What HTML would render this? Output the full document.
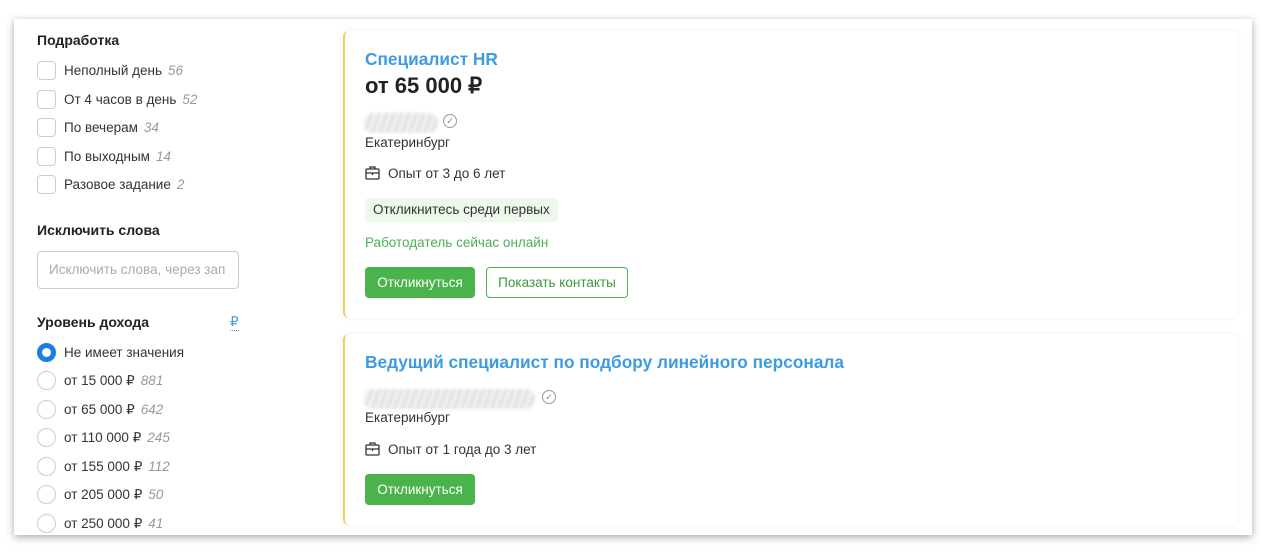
<!DOCTYPE html>
<html><head><meta charset="utf-8"><style>
*{margin:0;padding:0;box-sizing:border-box}
body{width:1280px;height:558px;background:#fff;font-family:"Liberation Sans",Arial,sans-serif;color:#333;position:relative;overflow:hidden}
.panel{position:absolute;left:14px;top:19px;width:1238px;height:516px;background:#fff;box-shadow:0 2px 8px rgba(0,0,0,.35)}
.a{position:absolute;white-space:nowrap}
.h{font-weight:bold;font-size:14px;color:#222}
.t{font-size:13.5px;color:#333}
.n{font-style:italic;color:#999;margin-left:6px}
.cb{position:absolute;width:19px;height:19px;border:1px solid #ccc;border-radius:4px}
.rb{position:absolute;width:19px;height:19px;border:1px solid #ccc;border-radius:50%}
.card{position:absolute;left:343px;width:894px;background:#fff;border-left:2px solid #f3cf57;border-radius:6px;box-shadow:0 0 6px rgba(0,0,0,.07)}
.title{font-size:17.3px;font-weight:bold;color:#3d9be0}
.btn{position:absolute;height:31px;border-radius:4px;font-size:13.5px;line-height:31px;text-align:center}
.blur{position:absolute;height:20px;border-radius:10px;background:repeating-linear-gradient(110deg,#ddd 0 3px,#f3f3f3 3px 7px);filter:blur(1.5px)}
.chk{position:absolute;width:14px;height:14px;border:1px solid #999;border-radius:50%;font-size:9px;line-height:12px;text-align:center;color:#888}
</style></head><body>
<div class="panel"></div>

<div class="a h" style="left:37px;top:32px">Подработка</div>
<div class="cb" style="left:37px;top:61px"></div><div class="a t" style="left:64px;top:63px">Неполный день<span class="n">56</span></div>
<div class="cb" style="left:37px;top:90px"></div><div class="a t" style="left:64px;top:92px">От 4 часов в день<span class="n">52</span></div>
<div class="cb" style="left:37px;top:118px"></div><div class="a t" style="left:64px;top:120px">По вечерам<span class="n">34</span></div>
<div class="cb" style="left:37px;top:147px"></div><div class="a t" style="left:64px;top:149px">По выходным<span class="n">14</span></div>
<div class="cb" style="left:37px;top:175px"></div><div class="a t" style="left:64px;top:177px">Разовое задание<span class="n">2</span></div>

<div class="a h" style="left:37px;top:222px">Исключить слова</div>
<div class="a" style="left:37px;top:251px;width:202px;height:38px;border:1px solid #ccc;border-radius:4px;overflow:hidden;font-size:13.5px;color:#aaa;line-height:36px;padding-left:11px">Исключить слова, через зап</div>

<div class="a h" style="left:37px;top:314px">Уровень дохода</div>
<div class="a" style="left:230px;top:314px;font-size:13.5px;color:#3d9be0;border-bottom:1px dotted #3d9be0">₽</div>
<div class="a" style="left:37px;top:343px;width:19px;height:19px;border-radius:50%;border:5px solid #1a7fe0"></div><div class="a t" style="left:64px;top:345px">Не имеет значения</div>
<div class="rb" style="left:37px;top:371px"></div><div class="a t" style="left:64px;top:373px">от 15 000 ₽<span class="n">881</span></div>
<div class="rb" style="left:37px;top:400px"></div><div class="a t" style="left:64px;top:402px">от 65 000 ₽<span class="n">642</span></div>
<div class="rb" style="left:37px;top:428px"></div><div class="a t" style="left:64px;top:430px">от 110 000 ₽<span class="n">245</span></div>
<div class="rb" style="left:37px;top:457px"></div><div class="a t" style="left:64px;top:459px">от 155 000 ₽<span class="n">112</span></div>
<div class="rb" style="left:37px;top:485px"></div><div class="a t" style="left:64px;top:487px">от 205 000 ₽<span class="n">50</span></div>
<div class="rb" style="left:37px;top:514px"></div><div class="a t" style="left:64px;top:516px">от 250 000 ₽<span class="n">41</span></div>

<div class="card" style="top:31px;height:287px"></div>
<div class="a title" style="left:365px;top:49px">Специалист HR</div>
<div class="a" style="left:365px;top:73px;font-size:22px;font-weight:bold;color:#222">от 65 000 ₽</div>
<div class="blur" style="left:363px;top:113px;width:75px"></div>
<div class="chk" style="left:443px;top:114px">✓</div>
<div class="a t" style="left:365px;top:135px">Екатеринбург</div>
<svg class="a" style="left:365px;top:166px" width="15" height="14" viewBox="0 0 15 14"><rect x="1" y="3" width="13" height="10" rx="1" fill="none" stroke="#333" stroke-width="1.3"/><path d="M5 3V1h5v2M1 7h13M7.5 7v2" fill="none" stroke="#333" stroke-width="1.3"/></svg>
<div class="a t" style="left:388px;top:166px">Опыт от 3 до 6 лет</div>
<div class="a" style="left:365px;top:198px;height:24px;padding:0 8px;background:#ecf8ea;border-radius:4px;font-size:13.5px;line-height:24px;color:#333">Откликнитесь среди первых</div>
<div class="a" style="left:365px;top:235px;font-size:13.5px;color:#4caf50">Работодатель сейчас онлайн</div>
<div class="btn" style="left:365px;top:267px;width:110px;background:#4bb34b;color:#fff">Откликнуться</div>
<div class="btn" style="left:486px;top:267px;width:142px;border:1px solid #4bb34b;color:#3a9a3a;line-height:29px">Показать контакты</div>

<div class="card" style="top:334px;height:191px"></div>
<div class="a title" style="left:365px;top:352px">Ведущий специалист по подбору линейного персонала</div>
<div class="blur" style="left:363px;top:389px;width:172px"></div>
<div class="chk" style="left:542px;top:390px">✓</div>
<div class="a t" style="left:365px;top:410px">Екатеринбург</div>
<svg class="a" style="left:365px;top:442px" width="15" height="14" viewBox="0 0 15 14"><rect x="1" y="3" width="13" height="10" rx="1" fill="none" stroke="#333" stroke-width="1.3"/><path d="M5 3V1h5v2M1 7h13M7.5 7v2" fill="none" stroke="#333" stroke-width="1.3"/></svg>
<div class="a t" style="left:388px;top:442px">Опыт от 1 года до 3 лет</div>
<div class="btn" style="left:365px;top:474px;width:110px;background:#4bb34b;color:#fff">Откликнуться</div>
</body></html>
